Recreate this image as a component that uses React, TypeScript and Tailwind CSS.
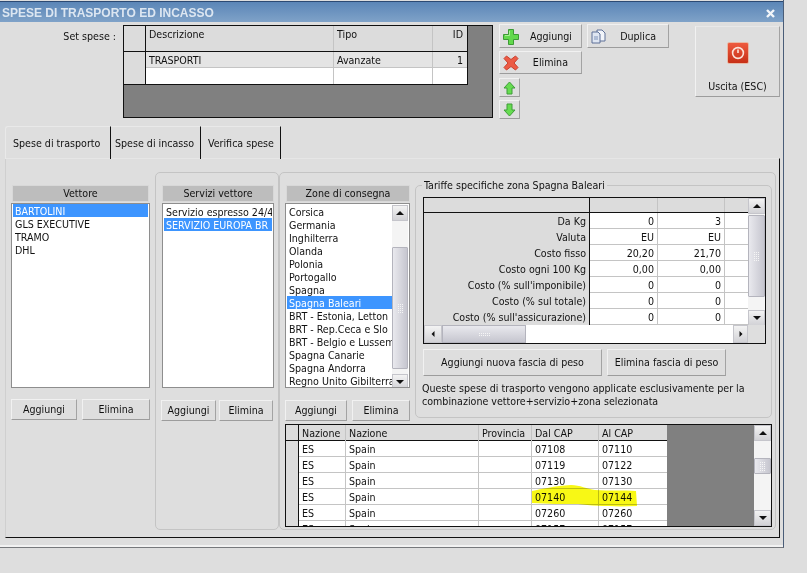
import type { ReactNode } from "react";

const FONT = "font-['DejaVu_Sans_Condensed','Liberation_Sans',sans-serif]";
const BTN =
  "flex items-center justify-center pt-[1px] bg-[#dedede] border border-t-[#f1f1f1] border-l-[#f1f1f1] border-r-[#a3a3a3] border-b-[#9c9c9c] text-[10.6px] text-[#111]";

// ── Small drawings ─────────────────────────────────────────────────────────

function PlusIcon() {
  return (
    <svg width="16" height="16" viewBox="0 0 16 16">
      <path d="M5.5 .5h5v5h5v5h-5v5h-5v-5h-5v-5h5z" fill="#62d94c" stroke="#3d9a35" strokeWidth="1" strokeLinejoin="round" />
      <path d="M6.5 2v4.500H2" fill="none" stroke="#a9ee95" strokeWidth="1" />
    </svg>
  );
}

function CrossIcon() {
  return (
    <svg width="16" height="16" viewBox="0 0 16 16">
      <path d="M1 3.500L3.500 1 8 4.500 12.500 1 15 3.500 11 8l4 4.500L12.500 15 8 11.500 3.500 15 1 12.500 5 8z" fill="#ec5b45" stroke="#c8402f" strokeWidth="1" strokeLinejoin="round" />
    </svg>
  );
}

function ArrowIcon({ up }: { up?: boolean }) {
  return (
    <svg width="13" height="14" viewBox="0 0 13 14">
      <path
        d={up ? "M6.500 1L12 7H9v6H4V7H1z" : "M6.500 13L12 7H9V1H4v6H1z"}
        fill="#66dc50"
        stroke="#3f9c39"
        strokeWidth="1"
      />
    </svg>
  );
}

function CopyIcon() {
  return (
    <svg width="15" height="15" viewBox="0 0 15 15">
      <path d="M6 1h5l3 3v8H6z" fill="#f2f5fa" stroke="#5f7198" />
      <path d="M1 3h6l2 2v9H1z" fill="#dfe6f2" stroke="#5f7198" />
      <path d="M3 8h4M3 10h4" stroke="#7e93ba" />
    </svg>
  );
}

function PowerIcon() {
  return (
    <div className="w-[22px] h-[22px] flex-none rounded-[2px] border border-[#e8b9a5] bg-gradient-to-b from-[#ee5a3e] to-[#c72f16] flex items-center justify-center">
      <svg width="14" height="14" viewBox="0 0 14 14" fill="none" stroke="#fbe3da" strokeWidth="1.6">
        <circle cx="7" cy="7" r="5.400" />
        <path d="M7 3.500v3.600" />
      </svg>
    </div>
  );
}

function Triangle({ dir }: { dir: "up" | "down" | "left" | "right" }) {
  const d = { up: "M4 1l4 4H0z", down: "M4 5L0 1h8z", left: "M1 3l4-4v8z", right: "M5 3L1-1v8z" }[dir];
  return (
    <svg width="8" height="6" viewBox={dir === "left" || dir === "right" ? "-1 -1 8 8" : "0 0 8 6"}>
      <path d={d} fill="#111" />
    </svg>
  );
}

const SCROLL_BTN =
  "flex items-center justify-center bg-gradient-to-b from-[#f3f3f3] to-[#d2d2d6] border border-[#c5c5cb]";
const THUMB_V =
  "flex-none flex items-center justify-center bg-gradient-to-r from-[#e9e9ee] to-[#c6c6cf] border border-[#b4b4bd] rounded-[1px]";

function Dots({ cols, rows }: { cols: number; rows: number }) {
  return (
    <div className="grid gap-[1px]" style={{ gridTemplateColumns: `repeat(${cols}, 1px)` }}>
      {Array.from({ length: cols * rows }).map((_, i) => (
        <span key={i} className="w-[1px] h-[1px] bg-[#f5f5f5]" />
      ))}
    </div>
  );
}

// Vertical bar: heights in px for the gap above the thumb, the thumb and the gap below
function VScroll({ before, thumb, after, w }: { before: number; thumb: number; after: number; w: string }) {
  return (
    <div className={`${w} flex-none flex flex-col bg-[#f4f4f4]`}>
      <div className={`${SCROLL_BTN} h-[16px] flex-none`}>
        <Triangle dir="up" />
      </div>
      <div className="flex-none" style={{ height: before }} />
      <div className={THUMB_V} style={{ height: thumb }}>
        <Dots cols={3} rows={5} />
      </div>
      <div className="flex-none" style={{ height: after }} />
      <div className={`${SCROLL_BTN} h-[16px] flex-none`}>
        <Triangle dir="down" />
      </div>
    </div>
  );
}

// ── Lists ──────────────────────────────────────────────────────────────────

function ColumnHead({ children, className }: { children: ReactNode; className: string }) {
  return (
    <div className={`h-[17px] pt-[1px] bg-[#bdbdbd] border border-[#d8d8d8] flex items-center justify-center text-[#111] ${className}`}>
      {children}
    </div>
  );
}

function ListBox({ items, selected, className }: { items: string[]; selected: number; className: string }) {
  return (
    <div className={`bg-white border border-[#8e8e8e] h-[185px] px-[1px] leading-[15px] text-[#111] overflow-hidden ${className}`}>
      {items.map((it, i) => (
        <div
          key={it}
          className={`h-[13px] pl-[2px] whitespace-nowrap overflow-hidden ${i === selected ? "bg-[#3d95ff] text-white" : ""}`}
        >
          {it}
        </div>
      ))}
    </div>
  );
}

// ── Data ───────────────────────────────────────────────────────────────────

const ZONES = [
  "Corsica",
  "Germania",
  "Inghilterra",
  "Olanda",
  "Polonia",
  "Portogallo",
  "Spagna",
  "Spagna Baleari",
  "BRT - Estonia, Letton",
  "BRT - Rep.Ceca e Slo",
  "BRT - Belgio e Lussem",
  "Spagna Canarie",
  "Spagna Andorra",
  "Regno Unito Gibilterra",
];

const RATES = [
  ["Da Kg", "0", "3"],
  ["Valuta", "EU", "EU"],
  ["Costo fisso", "20,20", "21,70"],
  ["Costo ogni 100 Kg", "0,00", "0,00"],
  ["Costo (% sull'imponibile)", "0", "0"],
  ["Costo (% sul totale)", "0", "0"],
  ["Costo (% sull'assicurazione)", "0", "0"],
];

const CAPS = [
  ["07108", "07110"],
  ["07119", "07122"],
  ["07130", "07130"],
  ["07140", "07144"],
  ["07260", "07260"],
  ["07157", "07157"],
];

export default function App() {
  return (
    <div className={`w-[807px] h-[573px] bg-[#dedede] overflow-hidden ${FONT}`}>
      <div className="w-[784px] h-[548px] border-r border-b border-r-[#4a5d78] border-b-[#77797c] pt-[1px]">
        {/* Title bar */}
        <div className="h-[21px] pt-[2px] border-t border-[#2c4a73] bg-gradient-to-b from-[#5b86b7] to-[#7fa2c8] flex items-center justify-between pl-[2px] pr-[8px]">
          <span className="font-['Liberation_Sans',sans-serif] font-bold text-[12px] text-[#dce6f1]">
            SPESE DI TRASPORTO ED INCASSO
          </span>
          <svg width="9" height="9" viewBox="0 0 9 9" stroke="#f2f5f9" strokeWidth="2.400">
            <path d="M1 1l7 7M8 1l-7 7" />
          </svg>
        </div>

        {/* Top section */}
        <div className="h-[104px] flex text-[10.6px] text-[#111]">
          <div className="w-[123px] flex-none pt-[7px] pr-[7px] text-right">Set spese :</div>
          <div className="w-[370px] h-[93px] mt-[3px] flex-none bg-[#808080] border border-[#111]">
            <div className="w-[345px] h-[60px] -mt-[1px] -ml-[1px] border border-[#111] bg-[#e4e4e4]">
              <div className="grid grid-cols-[22px_188px_99px_34px] h-[26px] bg-[#dcdcdc] border-b border-[#111]">
                <div className="border-r border-[#111]" />
                <div className="border-r border-[#c4c4c4] pl-[3px] pt-[1px]">Descrizione</div>
                <div className="border-r border-[#c4c4c4] pl-[3px] pt-[1px]">Tipo</div>
                <div className="pr-[4px] pt-[1px] text-right">ID</div>
              </div>
              <div className="grid grid-cols-[22px_188px_99px_34px] h-[16px] leading-[17px] border-b border-[#c4c4c4]">
                <div className="bg-[#dcdcdc] border-r border-[#111]" />
                <div className="border-r border-[#c4c4c4] pl-[3px]">TRASPORTI</div>
                <div className="border-r border-[#c4c4c4] pl-[3px]">Avanzate</div>
                <div className="pr-[4px] text-right">1</div>
              </div>
              <div className="grid grid-cols-[22px_188px_99px_34px] h-[16px] bg-white">
                <div className="bg-[#dcdcdc] border-r border-[#111]" />
                <div className="border-r border-[#c4c4c4]" />
                <div className="border-r border-[#c4c4c4]" />
                <div />
              </div>
            </div>
          </div>

          <div className="w-[83px] ml-[6px] mt-[2px] flex-none flex flex-col gap-[3px]">
            <button className={`${BTN} h-[24px] !justify-between pl-[3px] pr-[9px]`}>
              <PlusIcon />
              <span>Aggiungi</span>
            </button>
            <button className={`${BTN} h-[23px] !justify-between pl-[3px] pr-[13px]`}>
              <CrossIcon />
              <span>Elimina</span>
            </button>
            <button className={`${BTN} w-[21px] h-[19px] mt-[1px]`}>
              <ArrowIcon up />
            </button>
            <button className={`${BTN} w-[21px] h-[19px]`}>
              <ArrowIcon />
            </button>
          </div>

          <button className={`${BTN} w-[82px] h-[24px] ml-[5px] mt-[2px] flex-none !justify-between pl-[3px] pr-[12px]`}>
            <CopyIcon />
            <span>Duplica</span>
          </button>

          <button className={`${BTN} w-[85px] h-[71px] ml-[26px] mt-[4px] flex-none flex-col !justify-start !pt-[15px] gap-[15px] !border-t-[#e8e8e8]`}>
            <PowerIcon />
            <span>Uscita (ESC)</span>
          </button>
        </div>

        {/* Tabs */}
        <div className="h-[33px] pl-[5px] flex text-[10.6px] text-[#111] items-stretch">
          <div className="w-[106px] pt-[1px] border-r border-[#111] rounded-tl-[3px] border-t border-t-[#e9e9e9] border-l border-l-[#e9e9e9] pl-[7px] flex items-center">
            Spese di trasporto
          </div>
          <div className="w-[90px] pt-[1px] border-r border-[#111] border-t border-t-[#e9e9e9] pl-[4px] flex items-center">
            Spese di incasso
          </div>
          <div className="w-[80px] pt-[1px] border-r border-[#111] border-t border-t-[#e9e9e9] pl-[7px] flex items-center">
            Verifica spese
          </div>
        </div>

        {/* Tab pane */}
        <div className="ml-[5px] w-[775px] h-[380px] -mt-[1px] border-t border-t-[#e6e6e6] border-l border-l-[#cfcfcf] border-r border-r-[#111] border-b border-b-[#111] text-[10.6px] text-[#111] flex">
          {/* Vettore */}
          <div className="w-[139px] ml-[5px] mt-[26px] flex-none">
            <ColumnHead className="w-[137px] ml-[1px]">Vettore</ColumnHead>
            <ListBox className="mt-[1px]" items={["BARTOLINI", "GLS EXECUTIVE", "TRAMO", "DHL"]} selected={0} />
            <div className="flex justify-between mt-[11px]">
              <button className={`${BTN} w-[66px] h-[21px]`}>Aggiungi</button>
              <button className={`${BTN} w-[68px] h-[21px]`}>Elimina</button>
            </div>
          </div>

          {/* Servizi vettore */}
          <div className="w-[124px] h-[358px] ml-[5px] mt-[13px] flex-none border border-[#c4c4c4] rounded-[5px] px-[5px] pt-[12px]">
            <ColumnHead className="w-[112px] ml-[1px]">Servizi vettore</ColumnHead>
            <ListBox
              className="mt-[1px] w-[112px] ml-[1px] pt-[1px]"
              items={["Servizio espresso 24/4", "SERVIZIO EUROPA BR"]}
              selected={1}
            />
            <div className="flex justify-between mt-[12px]">
              <button className={`${BTN} w-[55px] h-[21px]`}>Aggiungi</button>
              <button className={`${BTN} w-[54px] h-[21px]`}>Elimina</button>
            </div>
          </div>

          {/* Zone + tariffe + CAP */}
          <div className="w-[497px] h-[358px] mt-[13px] flex-none border border-[#c4c4c4] rounded-[5px] pl-[5px] pt-[12px]">
            <div className="flex h-[239px]">
              <div className="w-[125px] flex-none">
                <ColumnHead className="w-[124px] ml-[1px]">Zone di consegna</ColumnHead>
                <div className="mt-[1px] flex bg-white border border-[#8e8e8e] h-[185px] pt-[1px] px-[1px] overflow-hidden">
                  <div className="flex-1 min-w-0 leading-[15px]">
                    {ZONES.map((z, i) => (
                      <div key={z} className={`h-[13px] pl-[2px] whitespace-nowrap overflow-hidden ${i === 7 ? "bg-[#3d95ff] text-white" : ""}`}>
                        {z}
                      </div>
                    ))}
                  </div>
                  <div className="flex flex-col">
                    <div className="h-[1px]" />
                    <VScroll w="w-[16px]" before={26} thumb={122} after={5} />
                  </div>
                </div>
                <div className="flex justify-between mt-[12px]">
                  <button className={`${BTN} w-[62px] h-[21px]`}>Aggiungi</button>
                  <button className={`${BTN} w-[58px] h-[21px]`}>Elimina</button>
                </div>
              </div>

              {/* Tariffe group box */}
              <div className="relative w-[357px] h-[233px] ml-[5px] flex-none border border-[#c4c4c4] rounded-[5px] pl-[7px] pt-[11px]">
                <span className="absolute left-[6px] -top-[8px] bg-[#dedede] px-[2px]">Tariffe specifiche zona Spagna Baleari</span>
                <div className="w-[343px] h-[147px] border border-[#111] bg-white flex flex-col">
                  <div className="flex flex-1 min-h-0">
                    <div className="flex-1 min-w-0 overflow-hidden">
                      <div className="grid grid-cols-[166px_68px_67px_24px] h-[15px] bg-[#dcdcdc] border-b border-[#111]">
                        <div className="border-r border-[#111]" />
                        <div className="border-r border-[#c4c4c4]" />
                        <div className="border-r border-[#c4c4c4]" />
                        <div />
                      </div>
                      {RATES.map((r) => (
                        <div key={r[0]} className="grid grid-cols-[166px_68px_67px_24px] h-[16px] leading-[16px] border-b border-[#c4c4c4]">
                          <div className="bg-[#dcdcdc] border-r border-[#111] text-right pr-[3px] whitespace-nowrap">{r[0]}</div>
                          <div className="border-r border-[#c4c4c4] text-right pr-[3px]">{r[1]}</div>
                          <div className="border-r border-[#c4c4c4] text-right pr-[3px]">{r[2]}</div>
                          <div />
                        </div>
                      ))}
                    </div>
                    <VScroll w="w-[17px]" before={1} thumb={82} after={13} />
                  </div>
                  <div className="h-[18px] flex-none flex bg-[#dedede]">
                    <div className={`${SCROLL_BTN} w-[18px]`}>
                      <Triangle dir="left" />
                    </div>
                    <div className="w-[84px] bg-gradient-to-b from-[#e9e9ee] to-[#c6c6cf] border border-[#b4b4bd] flex items-center justify-center">
                      <Dots cols={6} rows={2} />
                    </div>
                    <div className="w-[207px] bg-white" />
                    <div className={`${SCROLL_BTN} w-[15px]`}>
                      <Triangle dir="right" />
                    </div>
                  </div>
                </div>
                <div className="flex gap-[5px] mt-[5px]">
                  <button className={`${BTN} w-[179px] h-[27px]`}>Aggiungi nuova fascia di peso</button>
                  <button className={`${BTN} w-[119px] h-[27px]`}>Elimina fascia di peso</button>
                </div>
                <p className="mt-[6px] leading-[13px] -ml-[1px]">
                  Queste spese di trasporto vengono applicate esclusivamente per la
                  <br />
                  combinazione vettore+servizio+zona selezionata
                </p>
              </div>
            </div>

            {/* CAP grid */}
            <div className="relative w-[487px] h-[103px] border border-[#111] bg-[#808080] flex overflow-hidden">
              <div className="w-[381px] flex-none bg-white">
                <div className="grid grid-cols-[13px_47px_133px_53px_67px_68px] h-[16px] leading-[16px] bg-[#dcdcdc] border-b border-[#111]">
                  <div className="border-r border-[#111]" />
                  <div className="border-r border-[#c4c4c4] pl-[3px]">Nazione</div>
                  <div className="border-r border-[#c4c4c4] pl-[3px]">Nazione</div>
                  <div className="border-r border-[#c4c4c4] pl-[3px]">Provincia</div>
                  <div className="border-r border-[#c4c4c4] pl-[3px]">Dal CAP</div>
                  <div className="pl-[3px]">Al CAP</div>
                </div>
                {CAPS.map((c) => (
                  <div key={c[0]} className="grid grid-cols-[13px_47px_133px_53px_67px_68px] h-[16px] leading-[16px] border-b border-[#c4c4c4]">
                    <div className="bg-[#dcdcdc] border-r border-[#111]" />
                    <div className="border-r border-[#c4c4c4] pl-[3px]">ES</div>
                    <div className="border-r border-[#c4c4c4] pl-[3px]">Spain</div>
                    <div className="border-r border-[#c4c4c4]" />
                    <div className="border-r border-[#c4c4c4] pl-[3px]">{c[0]}</div>
                    <div className="pl-[3px]">{c[1]}</div>
                  </div>
                ))}
              </div>
              <div className="flex-1" />
              <div className="w-[17px] h-[101px] flex-none">
                <VScroll w="w-[17px]" before={17} thumb={16} after={36} />
              </div>
              {/* Highlighter stroke over the two CAP cells */}
              <svg className="absolute left-[246px] top-[60px] mix-blend-multiply" width="106" height="22" viewBox="0 0 106 22">
                <path d="M0 6C10 4 22 1 39 0C48 0 55 4 63 5C78 6 92 5 104 6L105 21C85 22 62 21 46 19C30 19 15 19 0 18Z" fill="#f8f815" />
              </svg>
            </div>
          </div>
        </div>

        <div className="h-[2px] mt-[7px] bg-[#f2f2f2]" />
      </div>
    </div>
  );
}
